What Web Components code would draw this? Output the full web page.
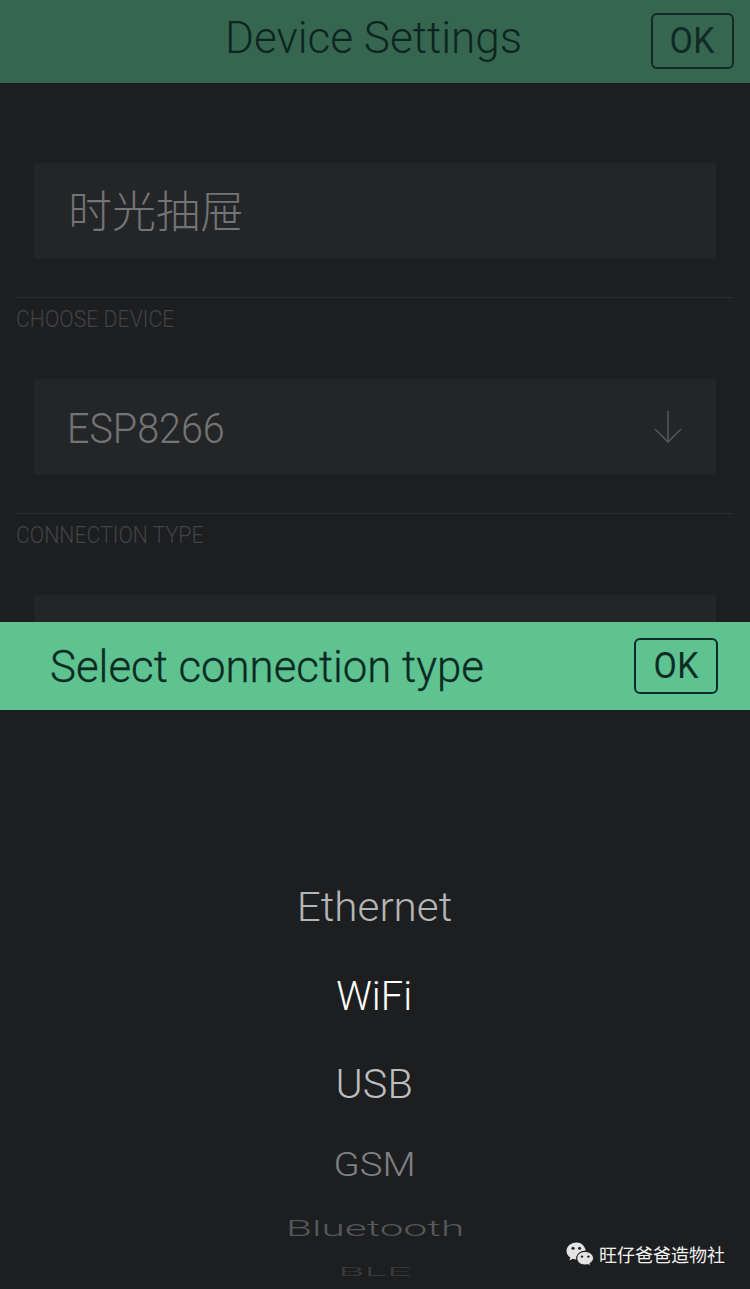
<!DOCTYPE html>
<html lang="zh"><head><meta charset="utf-8"><title>Device Settings</title>
<style>
html,body{margin:0;padding:0;background:#1d1e20}
body{width:750px;height:1289px;overflow:hidden;font-family:Roboto,"Noto Sans CJK SC",sans-serif}
</style></head><body>
<app-screen>
  <top-bar slot="head" title-text="Device Settings"></top-bar>
  <settings-form slot="form">
    <form-field cjk="1" style="margin-top:80px">时光抽屉</form-field>
    <section-label style="margin-top:38px">CHOOSE DEVICE</section-label>
    <form-field arrow="1" style="margin-top:49px">ESP8266</form-field>
    <section-label style="margin-top:38px">CONNECTION TYPE</section-label>
    <form-field style="margin-top:49px"></form-field>
  </settings-form>
  <picker-sheet slot="sheet" title-text="Select connection type">
    <wheel-item h="89" size="41" sx="1.03" sy="1" w="300" color="#b4b5b6" style="margin-top:153px;padding-right:2px">Ethernet</wheel-item>
    <wheel-item h="88" size="41" sx="0.97" sy="1" w="300" color="#ffffff" style="padding-right:2px">WiFi</wheel-item>
    <wheel-item h="88" size="41" sx="1.01" sy="1" w="300" color="#bcbdbe" style="padding-right:2px">USB</wheel-item>
    <wheel-item h="74" size="36" sx="1.065" sy="0.94" w="300" color="#808183">GSM</wheel-item>
    <wheel-item h="54" size="30" sx="1.41" sy="0.72" w="300" color="#57585a">Bluetooth</wheel-item>
    <wheel-item h="32" size="22" sx="1.94" sy="0.55" w="300" color="#3a3b3d">BLE</wheel-item>
    <wechat-mark slot="mark">旺仔爸爸造物社</wechat-mark>
  </picker-sheet>
</app-screen>
<script>
function def(name, html){
  customElements.define(name, class extends HTMLElement{
    connectedCallback(){
      if(this.shadowRoot) return;
      const r=this.attachShadow({mode:'open'});
      r.innerHTML=typeof html==='function'?html(this):html;
    }
  });
}
def('app-screen',`<style>
:host{display:flex;flex-direction:column;width:750px;height:1289px;overflow:hidden;background:#1d1e20}
</style><slot name="head"></slot><slot name="form"></slot><slot name="sheet"></slot>`);
def('ok-button',`<style>
:host{display:flex;align-items:center;justify-content:center;box-sizing:border-box;border:2px solid var(--ok-ink);border-radius:6px;width:var(--ok-w);height:var(--ok-h);color:var(--ok-ink);font:400 36px/1 Roboto,sans-serif}
span{display:inline-block;transform:scaleX(.94);letter-spacing:.5px}
</style><span>OK</span>`);
def('top-bar',el=>`<style>
:host{display:block;height:83px;background:#366650;box-sizing:border-box;--ok-ink:#102a25;--ok-w:83px;--ok-h:56px}
.row{position:relative;display:flex;align-items:center;justify-content:flex-end;height:83px;padding-right:16px;box-sizing:border-box}
h1{position:absolute;left:0;right:2px;top:0;margin:0;text-align:center;font:300 45px/75px Roboto,sans-serif;color:#0d2621}
h1 span{display:inline-block;transform:scaleX(.98)}
ok-button{margin-top:-2px}
</style><div class="row"><h1><span>${el.getAttribute('title-text')}</span></h1><ok-button></ok-button></div>`);
def('settings-form',`<style>
:host{display:flex;flex-direction:column;height:539px;overflow:hidden;background:#1d1e20;box-sizing:border-box;flex:none}
</style><slot></slot>`);
def('form-field',el=>`<style>
:host{display:flex;flex:none;align-items:center;justify-content:space-between;box-sizing:border-box;width:682px;height:96px;margin-left:34px;padding:0 33px 0 ${el.hasAttribute('cjk')?34:33}px;background:#242527;border-radius:3px;color:#737475}
.t{font:300 ${el.hasAttribute('cjk')?'44px':'42px'}/1 Roboto,"Noto Sans CJK SC",sans-serif;display:inline-block;margin-top:3px;transform-origin:left center;transform:scaleX(${el.hasAttribute('cjk')?1:.94})}
svg{display:block}
</style><span class="t"><slot></slot></span>${el.hasAttribute('arrow')?`<svg width="30" height="34" viewBox="0 0 30 34" fill="none" stroke="#535456" stroke-width="1.6"><path d="M15 1V32M2 19L15 32L28 19"/></svg>`:''}`);
def('section-label',`<style>
:host{display:block;flex:none;box-sizing:border-box;width:718px;margin-left:16px;border-top:1px solid #2b2c2e;height:33px;padding-top:10px;color:#424345;font:300 23px/24px Roboto,sans-serif;white-space:nowrap}
span{display:inline-block;transform-origin:left center;transform:scaleX(.925)}
</style><span><slot></slot></span>`);
def('picker-sheet',el=>`<style>
:host{display:block;flex:none;position:relative;height:667px;background:#1d1e20;--ok-ink:#0d2c24;--ok-w:84px;--ok-h:56px}
header{display:flex;align-items:center;justify-content:space-between;height:88px;background:#5ec291;padding:0 32px 0 50px;box-sizing:border-box}
h2{margin:0;font:300 45px/1 Roboto,sans-serif;color:#0a2a22;white-space:nowrap;-webkit-text-stroke:.3px #0a2a22}
h2 span{display:inline-block;transform-origin:left center;transform:scaleX(.973)}
.wheel{display:flex;flex-direction:column;align-items:center}
::slotted([slot=mark]){position:absolute;left:566px;top:620px}
</style><header><h2><span>${el.getAttribute('title-text')}</span></h2><ok-button></ok-button></header><div class="wheel"><slot></slot></div><slot name="mark"></slot>`);
def('wheel-item',el=>`<style>
:host{display:flex;flex:none;align-items:center;justify-content:center;height:${el.getAttribute('h')}px;color:${el.getAttribute('color')};font:${el.getAttribute('w')} ${el.getAttribute('size')}px/1 Roboto,sans-serif;white-space:nowrap}
span{display:inline-block;transform:scale(${el.getAttribute('sx')},${el.getAttribute('sy')})}
</style><span><slot></slot></span>`);
def('wechat-mark',`<style>
:host{display:flex;align-items:center;gap:5px;color:#f2f2f2;font:400 18px/24px "Noto Sans CJK SC",sans-serif;white-space:nowrap}
svg{display:block}
</style><svg width="28" height="24" viewBox="0 0 28 24"><path fill="#e4e4e4" d="M10.5 0.5C4.9 0.5 0.5 4.3 0.5 9C0.5 11.7 2 14 4.3 15.6L3.4 18.6L6.8 16.8C8 17.2 9 17.4 10.3 17.4C9.9 13 13.6 8.8 19.9 8.6C18.9 4 15.1 0.5 10.5 0.5Z"/><path fill="#e4e4e4" stroke="#1d1e20" stroke-width="1" d="M19 9.5C14.4 9.5 10.8 12.5 10.8 16.3C10.8 20.1 14.4 23 19 23C20 23 20.9 22.9 21.8 22.6L24.6 24L23.9 21.5C26 20.1 27.5 18.3 27.5 16.3C27.5 12.5 23.7 9.5 19 9.5Z"/><circle cx="7" cy="6.3" r="1.5" fill="#1d1e20"/><circle cx="13.6" cy="6.3" r="1.5" fill="#1d1e20"/><circle cx="16" cy="14.6" r="1.2" fill="#1d1e20"/><circle cx="22.4" cy="14.6" r="1.2" fill="#1d1e20"/></svg><span><slot></slot></span>`);
</script>
</body></html>
